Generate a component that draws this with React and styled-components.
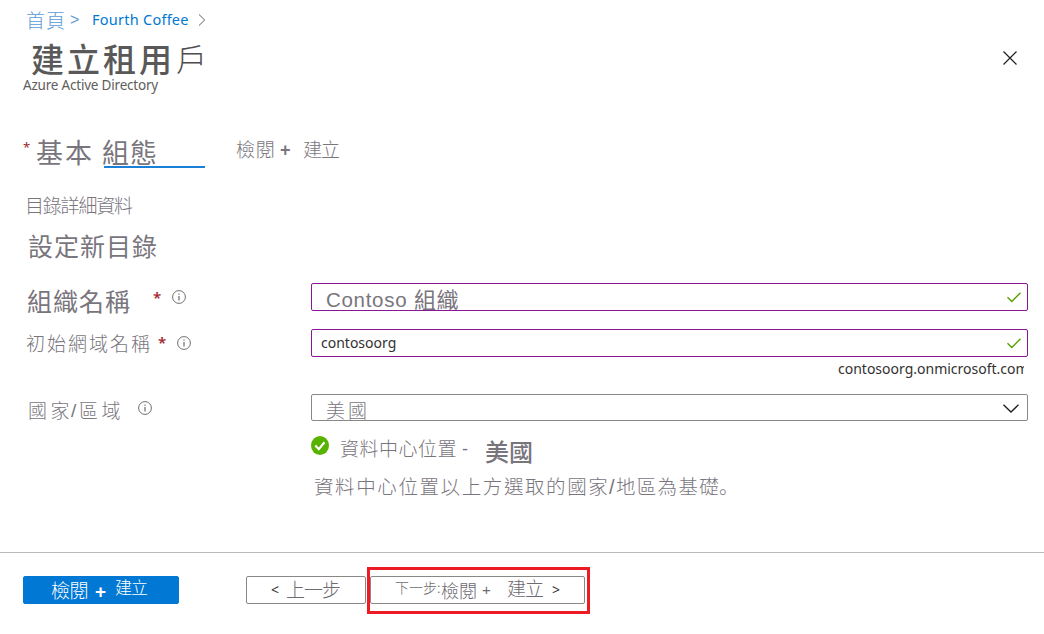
import React from "react";
import styled, { createGlobalStyle } from "styled-components";

const GlobalStyle = createGlobalStyle`
  * { box-sizing: border-box; }
  body { margin: 0; background: #fff; overflow: hidden; }
`;

const cjk = '"Noto Sans CJK TC", sans-serif';
const latin = '"Noto Sans", "Open Sans", sans-serif';

const Page = styled.main`
  width: 1044px;
  height: 634px;
  display: flex;
  flex-direction: column;
  background: #fff;
  color: #79757d;
  font-family: ${cjk};
`;

const Row = styled.div`
  display: flex;
  align-items: flex-start;
  flex: 0 0 ${(p) => p.$h}px;
  height: ${(p) => p.$h}px;
  padding-left: ${(p) => p.$pl || 0}px;
`;

/* A run of text with its own size, tracking and column width. */
const Text = styled.span`
  flex: 0 0 ${(p) => p.$w}px;
  width: ${(p) => p.$w}px;
  margin-top: ${(p) => p.$mt || 0}px;
  margin-left: ${(p) => p.$ml || 0}px;
  font-family: ${(p) => (p.$latin ? latin : cjk)};
  font-size: ${(p) => p.$size || 14}px;
  font-weight: ${(p) => p.$weight || 300};
  letter-spacing: ${(p) => p.$ls || 0}px;
  line-height: 1;
  color: ${(p) => p.$color || "inherit"};
  text-align: left;
  white-space: nowrap;
`;

const Arial = styled(Text)`
  font-family: "Liberation Sans", Arial, sans-serif;
`;

const FullStop = styled(Text)`
  font-family: "Noto Sans CJK SC", sans-serif;
`;

const Icon = styled.svg`
  display: block;
  flex: 0 0 auto;
  margin-top: ${(p) => p.$mt || 0}px;
  margin-left: ${(p) => p.$ml || 0}px;
  fill: none;
`;

const ActiveTab = styled.div`
  display: flex;
  align-items: flex-start;
  width: 101px;
  height: 36px;
  margin-right: 31px;
  border-bottom: 2px solid #1a7fd6;
`;

const Label = styled.div`
  display: flex;
  align-items: flex-start;
  flex: 0 0 311px;
  padding-left: ${(p) => p.$pl}px;
`;

const Field = styled.div`
  display: flex;
  align-items: flex-start;
  justify-content: space-between;
  width: 717px;
  height: ${(p) => p.$h || 28}px;
  border: 1px solid ${(p) => (p.$plain ? "#8a8886" : "#881798")};
  border-radius: 2px;
  padding: 0 6px 0 ${(p) => p.$pl}px;
`;

const FieldText = styled.div`
  display: flex;
`;

const Clip = styled.div`
  width: 186px;
  height: 22px;
  overflow: hidden;
  display: flex;
`;

const Footer = styled.footer`
  display: flex;
  align-items: flex-start;
  height: 82px;
  border-top: 1px solid #bababa;
  padding: 14px 0 0 23px;
`;

const Button = styled.button`
  display: flex;
  align-items: flex-start;
  width: ${(p) => p.$w}px;
  height: 28px;
  margin: 0;
  padding: 0 0 0 ${(p) => p.$pl}px;
  border: 1px solid ${(p) => (p.$primary ? "#0078d4" : "#8a8886")};
  border-radius: 2px;
  background: ${(p) => (p.$primary ? "#0078d4" : "#fff")};
  color: ${(p) => (p.$primary ? "#fff" : "#6d6a70")};
`;

const ButtonSlot = styled.div`
  padding-top: 9px;
  margin-right: ${(p) => p.$mr || 0}px;
`;

const Highlight = styled.div`
  width: 223px;
  height: 47px;
  border: 3px solid #ed1c24;
  padding-top: 6px;
`;

const Info = () => (
  <Icon $mt={7} width="14" height="14" viewBox="0 0 14 14" stroke="#605e5c">
    <circle cx="7" cy="7" r="6.4" strokeWidth="0.9" />
    <path d="M7 6v4.4M7 3.6v1.2" strokeWidth="1.1" />
  </Icon>
);

const Check = () => (
  <Icon $mt={8} width="14" height="11" viewBox="0 0 14 11" stroke="#57a300">
    <path d="M0.5 5.2 4.8 9.5 13.5 0.8" strokeWidth="1.4" />
  </Icon>
);

export default function App() {
  return (
    <Page>
      <GlobalStyle />
      <Row $h={40} $pl={26}>
        <Text $w={44} $mt={10} $size={19} $ls={1} $color="#5b9bd5">首頁</Text>
        <Arial $w={22} $mt={12} $size={16} $color="#5b9bd5">&gt;</Arial>
        <Text $latin $w={106} $mt={12} $size={14.5} $ls={0.25} $weight={400} $color="#0078d4">Fourth Coffee</Text>
        <Icon $mt={14} width="8" height="12" viewBox="0 0 8 12" stroke="#605e5c">
          <path d="M1 0.5 6.7 6 1 11.5" />
        </Icon>
      </Row>
      <Row $h={38} $pl={31}>
        <Text $w={145} $mt={2} $size={33} $ls={3} $weight={500} $color="#595959">建立租用</Text>
        <Text $w={826} $mt={2} $size={31} $color="#4d4d4d">戶</Text>
        <Icon $ml={1} $mt={11} width="14" height="14" viewBox="0 0 14 14" stroke="#201f1e">
          <path d="M0.5 0.5 13.5 13.5M13.5 0.5 0.5 13.5" strokeWidth="1.2" />
        </Icon>
      </Row>
      <Row $h={54} $pl={23}>
        <Text $latin $w={200} $mt={1} $size={13.5} $ls={-0.2} $weight={400} $color="#605e5c">Azure Active Directory</Text>
      </Row>
      <Row $h={58} $pl={23}>
        <Text $latin $w={13} $mt={9} $size={13} $weight={400} $color="#a4262c">*</Text>
        <Text $w={68} $mt={6} $size={27} $ls={2} $weight={400}>基本</Text>
        <ActiveTab>
          <Text $ml={-2} $w={60} $mt={6} $size={27} $ls={1} $weight={400}>組態</Text>
        </ActiveTab>
        <Text $w={44} $mt={7} $size={19} $ls={0.8}>檢閱</Text>
        <Arial $w={23} $mt={9} $size={18} $weight={700}>+</Arial>
        <Text $w={40} $mt={7} $size={19} $ls={-1}>建立</Text>
      </Row>
      <Row $h={40} $pl={25}>
        <Text $w={120} $mt={5} $size={19} $ls={-1.2}>目錄詳細資料</Text>
      </Row>
      <Row $h={53} $pl={28}>
        <Text $w={140} $mt={3} $size={25} $ls={1} $weight={400}>設定新目錄</Text>
      </Row>
      <Row $h={46}>
        <Label $pl={27}>
          <Text $w={126} $mt={5} $size={25} $ls={1} $weight={400}>組織名稱</Text>
          <Text $latin $w={19} $mt={7} $size={15} $weight={600} $color="#a4262c">*</Text>
          <Info />
        </Label>
        <Field $pl={14}>
          <FieldText>
            <Arial $w={88} $mt={6} $size={20.5} $ls={0.7} $weight={400}>Contoso</Arial>
            <Text $w={50} $mt={3} $size={22} $ls={0.4} $weight={400}>組織</Text>
          </FieldText>
          <Check />
        </Field>
      </Row>
      <Row $h={28}>
        <Label $pl={26}>
          <Text $w={132} $mt={4} $size={19} $ls={2}>初始網域名稱</Text>
          <Text $latin $w={19} $mt={6} $size={15} $weight={600} $color="#a4262c">*</Text>
          <Info />
        </Label>
        <Field $pl={9}>
          <Text $latin $w={120} $mt={6} $size={14} $weight={400} $color="#323130">contosoorg</Text>
          <Check />
        </Field>
      </Row>
      <Row $h={37} $pl={838}>
        <Clip>
          <Text $latin $w={200} $mt={5} $size={14} $weight={400} $color="#323130">contosoorg.onmicrosoft.com</Text>
        </Clip>
      </Row>
      <Row $h={40}>
        <Label $pl={28}>
          <Text $w={43} $mt={6} $size={19} $ls={3.5}>國家</Text>
          <Arial $w={8} $mt={7} $size={19} $weight={400}>/</Arial>
          <Text $w={59} $mt={6} $size={19} $ls={3.5}>區域</Text>
          <Info />
        </Label>
        <Field $plain $h={27} $pl={14}>
          <Text $w={50} $mt={5} $size={19} $ls={3}>美國</Text>
          <Icon $mt={9} width="18" height="9" viewBox="0 0 18 9" stroke="#201f1e">
            <path d="M0.5 0.7 8 8 15.5 0.7" strokeWidth="1.4" />
          </Icon>
        </Field>
      </Row>
      <Row $h={39} $pl={311}>
        <Icon $mt={2} width="18" height="19" viewBox="0 0 18 19">
          <ellipse cx="9" cy="9.5" rx="9" ry="9.5" fill="#57b300" />
          <path d="M4.3 9.6 7.8 13.2 13.5 6.2" stroke="#fff" strokeWidth="2.2" />
        </Icon>
        <Text $ml={11} $w={122} $mt={4} $size={19} $ls={0.5}>資料中心位置</Text>
        <Arial $w={23} $mt={6} $size={18}>-</Arial>
        <Text $w={60} $mt={5} $size={24} $weight={500}>美國</Text>
      </Row>
      <Row $h={79} $pl={314}>
        <Text $w={295} $mt={3} $size={19.5} $ls={1.6}>資料中心位置以上方選取的國家</Text>
        <Arial $w={7} $mt={4} $size={20} $weight={400}>/</Arial>
        <Text $w={103} $mt={3} $size={19.5} $ls={1.3}>地區為基礎</Text>
        <FullStop $w={20} $mt={3} $size={19.5}>。</FullStop>
      </Row>
      <Footer>
        <ButtonSlot $mr={67}>
          <Button $primary $w={156} $pl={27}>
            <Text $w={44} $mt={3} $size={19} $ls={-0.5}>檢閱</Text>
            <Arial $w={20} $mt={5} $size={19} $weight={700}>+</Arial>
            <Text $w={36} $mt={1} $size={17} $ls={-1}>建立</Text>
          </Button>
        </ButtonSlot>
        <ButtonSlot $mr={1}>
          <Button $w={120} $pl={24}>
            <Text $latin $w={15} $mt={6} $size={14} $weight={400} $color="#323130">&lt;</Text>
            <Text $w={60} $mt={2} $size={19} $ls={-1}>上一步</Text>
          </Button>
        </ButtonSlot>
        <Highlight>
          <Button $w={215} $pl={24}>
            <Text $w={46} $mt={3} $size={14}>下一步:</Text>
            <Text $w={41} $mt={4} $size={18}>檢閱</Text>
            <Arial $w={25} $mt={5} $size={15} $weight={400}>+</Arial>
            <Text $w={45} $mt={1} $size={19} $ls={-1}>建立</Text>
            <Text $latin $w={12} $mt={6} $size={14} $weight={400} $color="#323130">&gt;</Text>
          </Button>
        </Highlight>
      </Footer>
    </Page>
  );
}
